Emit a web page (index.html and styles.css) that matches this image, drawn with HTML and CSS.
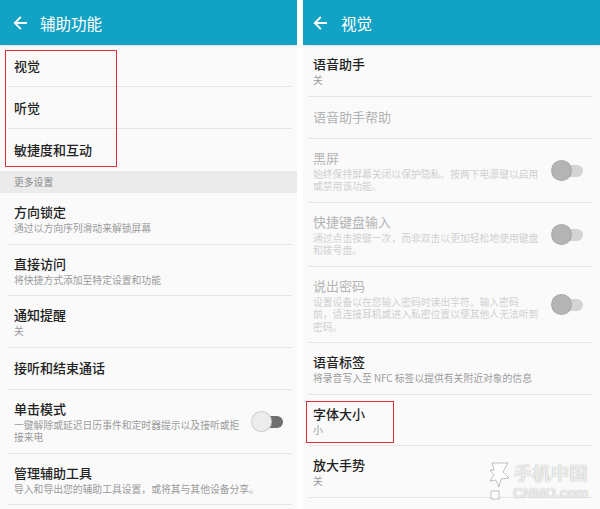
FILE: index.html
```html
<!DOCTYPE html>
<html lang="zh-CN">
<head>
<meta charset="utf-8">
<title>辅助功能 / 视觉</title>
<link rel="stylesheet" href="styles.css">
</head>
<body>
<div class="screen">
  <section class="panel panel-left">
    <header class="appbar">
      <svg class="back" viewBox="0 0 14 14" width="14" height="14"><path d="M13 7H2M7.2 1.6L1.8 7l5.4 5.4" fill="none" stroke="#fff" stroke-width="1.8" stroke-linecap="square"/></svg>
      <h1 class="appbar-title">辅助功能</h1>
    </header>
    <ul class="list">
      <li class="item single"><div class="text"><div class="title">视觉</div></div></li>
      <li class="item single"><div class="text"><div class="title">听觉</div></div></li>
      <li class="item single no-line"><div class="text"><div class="title">敏捷度和互动</div></div></li>
    </ul>
    <div class="section">更多设置</div>
    <ul class="list">
      <li class="item"><div class="text"><div class="title">方向锁定</div><div class="sub">通过以方向序列滑动来解锁屏幕</div></div></li>
      <li class="item"><div class="text"><div class="title">直接访问</div><div class="sub">将快捷方式添加至特定设置和功能</div></div></li>
      <li class="item"><div class="text"><div class="title">通知提醒</div><div class="sub">关</div></div></li>
      <li class="item single"><div class="text"><div class="title">接听和结束通话</div></div></li>
      <li class="item"><div class="text"><div class="title">单击模式</div><div class="sub">一键解除或延迟日历事件和定时器提示以及接听或拒<br>接来电</div></div><span class="toggle"></span></li>
      <li class="item"><div class="text"><div class="title">管理辅助工具</div><div class="sub">导入和导出您的辅助工具设置，或将其与其他设备分享。</div></div></li>
    </ul>
  </section>

  <section class="panel panel-right">
    <header class="appbar">
      <svg class="back" viewBox="0 0 14 14" width="14" height="14"><path d="M13 7H2M7.2 1.6L1.8 7l5.4 5.4" fill="none" stroke="#fff" stroke-width="1.8" stroke-linecap="square"/></svg>
      <h1 class="appbar-title">视觉</h1>
    </header>
    <ul class="list">
      <li class="item"><div class="text"><div class="title">语音助手</div><div class="sub">关</div></div></li>
      <li class="item single disabled"><div class="text"><div class="title">语音助手帮助</div></div></li>
      <li class="item disabled"><div class="text"><div class="title">黑屏</div><div class="sub">始终保持屏幕关闭以保护隐私。按两下电源键以启用<br>或禁用该功能。</div></div><span class="toggle"></span></li>
      <li class="item disabled"><div class="text"><div class="title">快捷键盘输入</div><div class="sub">通过点击按键一次，而非双击以更加轻松地使用键盘<br>和拨号盘。</div></div><span class="toggle"></span></li>
      <li class="item disabled"><div class="text"><div class="title">说出密码</div><div class="sub">设置设备以在您输入密码时读出字符。输入密码<br>前，请连接耳机或进入私密位置以便其他人无法听到<br>密码。</div></div><span class="toggle"></span></li>
      <li class="item"><div class="text"><div class="title">语音标签</div><div class="sub">将录音写入至 NFC 标签以提供有关附近对象的信息</div></div></li>
      <li class="item"><div class="text"><div class="title">字体大小</div><div class="sub">小</div></div></li>
      <li class="item"><div class="text"><div class="title">放大手势</div><div class="sub">关</div></div></li>
    </ul>
  </section>

  <div class="mark mark-left"></div>
  <div class="mark mark-right"></div>

  <div class="watermark">
    <svg class="wm-star" viewBox="0 0 22 40" width="22" height="40"><path d="M3 2h16l-5 9 6 6-8 1-2 8-3-7-6 1 4-6-4-5 4 0z" fill="rgba(255,255,255,0.75)" stroke="rgba(120,120,120,0.45)" stroke-width="1"/><path d="M2 30h8v8H2z" fill="rgba(255,255,255,0.75)" stroke="rgba(120,120,120,0.45)" stroke-width="1"/></svg>
    <div class="wm-text">
      <div class="wm-cn">手机中国</div>
      <div class="wm-en">CNMO.com</div>
    </div>
  </div>
</div>
</body>
</html>
```

FILE: styles.css
```css
* { box-sizing: border-box; }
html, body { margin: 0; padding: 0; }
body {
  width: 600px;
  height: 509px;
  overflow: hidden;
  background: #ffffff;
  font-family: "Noto Sans CJK SC", "Noto Sans", sans-serif;
}
.screen {
  position: relative;
  width: 600px;
  height: 509px;
  display: flex;
  gap: 6px;
  overflow: hidden;
}
.panel {
  flex: 0 0 297px;
  height: 509px;
  background: #fafafa;
  overflow: hidden;
}
.appbar {
  height: 45px;
  background: #12a2c4;
  display: flex;
  align-items: center;
  box-shadow: 0 1px 2px rgba(0,0,0,0.12);
  position: relative;
  z-index: 1;
}
.panel-left .appbar { padding-left: 13px; }
.panel-right .appbar { padding-left: 10px; }
.back { display: block; flex: 0 0 auto; }
.appbar-title {
  margin: 0 0 0 13px;
  font-size: 15.5px;
  font-weight: 400;
  color: #ffffff;
  line-height: 20px;
}
.panel-right .appbar-title { margin-left: 14px; }
.list {
  list-style: none;
  margin: 0;
  padding: 0;
}
.panel-left .list { margin: 0 5px 0 8px; }
.panel-right .list { margin: 0 8px 0 5px; }
.item {
  display: flex;
  align-items: center;
  border-bottom: 1px solid #e4e4e4;
  padding: 10px 9px 9px 6px;
}
.panel-right .item { padding-left: 5px; }
.item.single {
  height: 42px;
  padding-top: 0;
  padding-bottom: 0;
}
.item.no-line { border-bottom: 0; }
.text { flex: 1 1 auto; min-width: 0; }
.title {
  font-size: 13px;
  line-height: 18px;
  font-weight: 500;
  color: #222222;
  white-space: nowrap;
}
.sub {
  margin-top: 1px;
  font-size: 9.8px;
  line-height: 12.5px;
  color: #9a9a9a;
  white-space: nowrap;
}
.disabled .title { color: #b3b3b3; font-weight: 400; }
.disabled .sub { color: #d0d0d0; }
.section {
  height: 22px;
  background: #ebebeb;
  padding-left: 14px;
  font-size: 9.8px;
  line-height: 22px;
  color: #8c8c8c;
}
.toggle {
  position: relative;
  flex: 0 0 auto;
  width: 30px;
  height: 12px;
  margin-left: 6px;
  border-radius: 6px;
  background: #6f6f6f;
}
.toggle::before {
  content: "";
  position: absolute;
  left: -1px;
  top: -3.5px;
  width: 19px;
  height: 19px;
  border-radius: 50%;
  background: #ececec;
  box-shadow: 0 0 0 1px #cfcfcf, 0 1px 1px rgba(0,0,0,0.15);
}
.disabled .toggle { background: #d4d4d4; }
.disabled .toggle::before {
  background: #b4b4b4;
  box-shadow: 0 0 0 1px #a9a9a9;
}
.mark {
  position: absolute;
  border: 1.5px solid #e22d3b;
  z-index: 2;
}
.mark-left { left: 5px; top: 50px; width: 112px; height: 117px; }
.mark-right { left: 306px; top: 401px; width: 88px; height: 42px; }
.watermark {
  position: absolute;
  left: 489px;
  top: 461px;
  display: flex;
  align-items: flex-start;
  gap: 2px;
  z-index: 3;
}
.wm-star { display: block; }
.wm-text { display: flex; flex-direction: column; align-items: center; }
.wm-cn {
  font-size: 18.5px;
  line-height: 22px;
  font-weight: 700;
  color: rgba(255,255,255,0.8);
  text-shadow: 0 0 1px rgba(90,90,90,0.6);
}
.wm-en {
  margin-top: 2px;
  font-family: "Liberation Sans", sans-serif;
  font-size: 14px;
  line-height: 16px;
  font-weight: 700;
  color: rgba(255,255,255,0.8);
  text-shadow: 0 0 1px rgba(90,90,90,0.6);
}
```
